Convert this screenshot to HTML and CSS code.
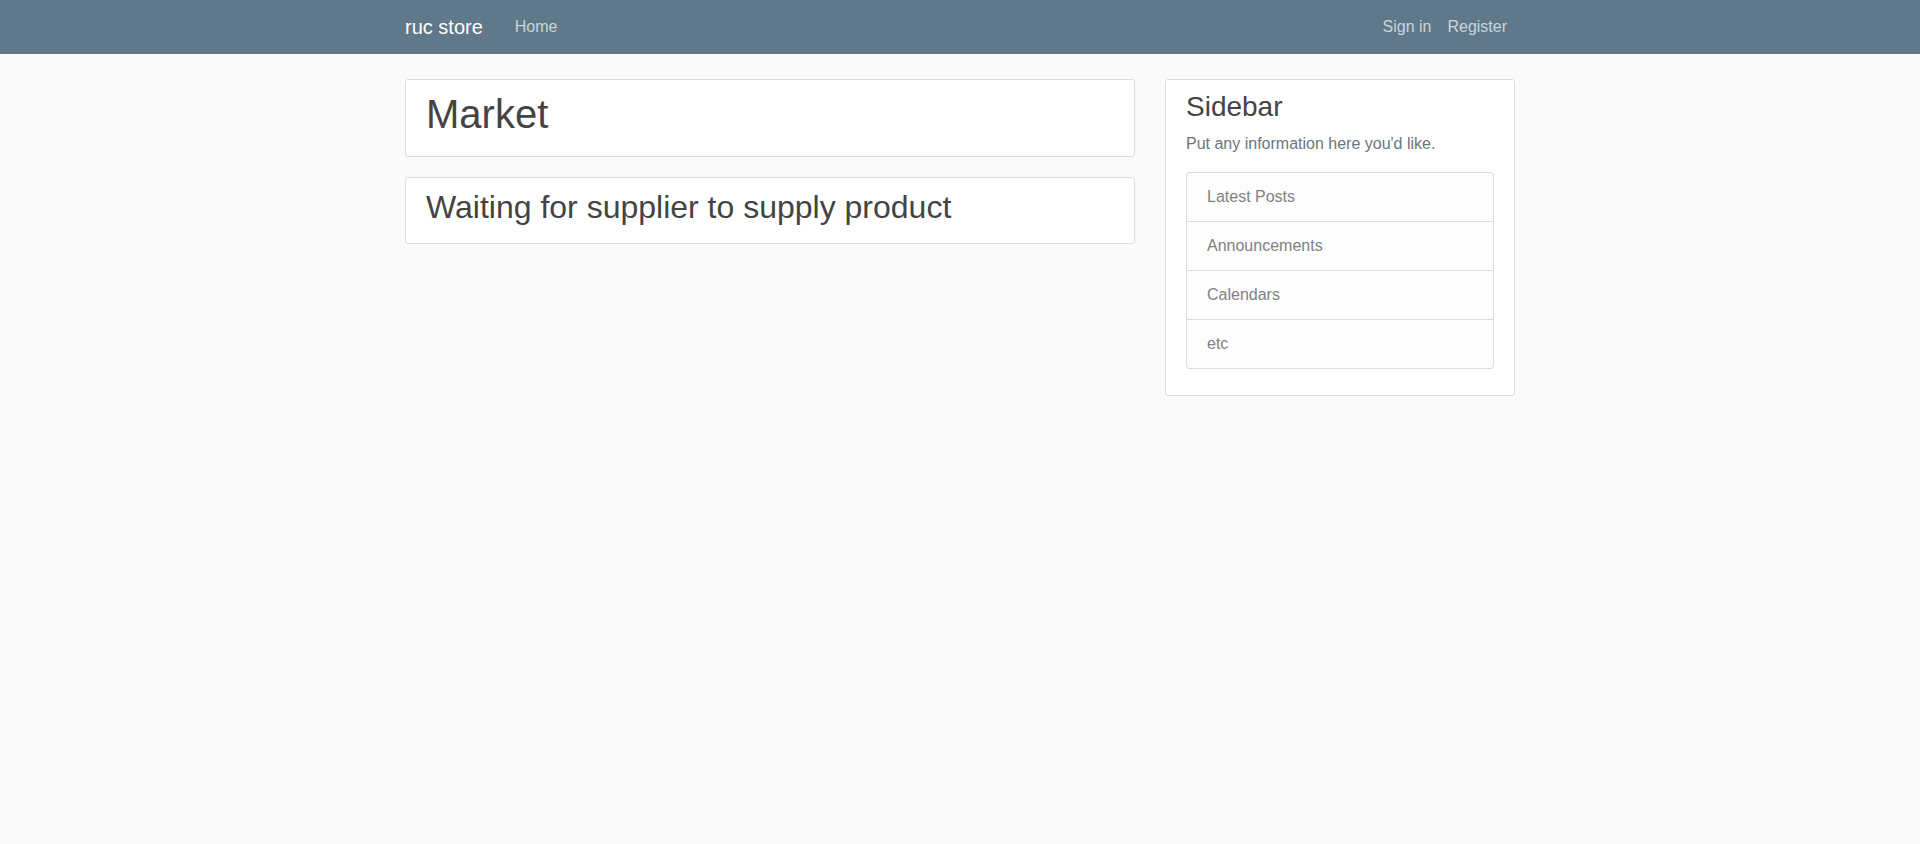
FILE: index.html
```html
<!DOCTYPE html>
<html lang="en">
<head>
<meta charset="utf-8">
<title>ruc store</title>
<link rel="stylesheet" href="styles.css">
</head>
<body>
<header class="site-header">
  <nav class="navbar">
    <div class="container nav-inner">
      <a class="navbar-brand" href="#">ruc store</a>
      <div class="navbar-nav">
        <a class="nav-link" href="#">Home</a>
      </div>
      <div class="navbar-nav nav-right">
        <a class="nav-link" href="#">Sign in</a>
        <a class="nav-link" href="#">Register</a>
      </div>
    </div>
  </nav>
</header>
<main class="container">
  <div class="row">
    <div class="col-main">
      <div class="content-section">
        <h1 class="title-lg">Market</h1>
      </div>
      <div class="content-section">
        <h2 class="title-md">Waiting for supplier to supply product</h2>
      </div>
    </div>
    <div class="col-side">
      <div class="content-section">
        <h3 class="title-sm">Sidebar</h3>
        <p class="text-muted">Put any information here you'd like.</p>
        <ul class="list-group">
          <li class="list-group-item">Latest Posts</li>
          <li class="list-group-item">Announcements</li>
          <li class="list-group-item">Calendars</li>
          <li class="list-group-item">etc</li>
        </ul>
      </div>
    </div>
  </div>
</main>
</body>
</html>
```
FILE: styles.css
```css
* { box-sizing: border-box; }

html, body { margin: 0; padding: 0; }

body {
  background: #fafafa;
  color: #333333;
  font-family: "Liberation Sans", Arial, sans-serif;
  font-size: 16px;
  line-height: 1.5;
}

a { text-decoration: none; }

.container {
  width: 1140px;
  margin: 0 auto;
  padding: 0 15px;
}

.navbar {
  background-color: #5f788a;
  height: 54px;
  padding: 7px 0;
}

.nav-inner {
  display: flex;
  align-items: center;
}

.navbar-brand {
  color: #ffffff;
  font-size: 20px;
  line-height: 30px;
  padding: 5px 0;
  margin-right: 24px;
}

.navbar-nav {
  display: flex;
}

.nav-right { margin-left: auto; }

.nav-link {
  color: #cbd5db;
  padding: 8px;
  line-height: 24px;
}

main.container { margin-top: 25px; }

.row {
  display: flex;
  margin: 0 -15px;
}

.col-main {
  flex: 0 0 66.666667%;
  max-width: 66.666667%;
  padding: 0 15px;
}

.col-side {
  flex: 0 0 33.333333%;
  max-width: 33.333333%;
  padding: 0 15px;
}

.content-section {
  background: #ffffff;
  padding: 10px 20px;
  border: 1px solid #dddddd;
  border-radius: 3px;
  margin-bottom: 20px;
}

.title-lg, .title-md, .title-sm {
  color: #444444;
  font-weight: 500;
  line-height: 1.2;
  margin: 0 0 8px 0;
}

.title-lg { font-size: 40px; }
.title-md { font-size: 32px; margin-bottom: 7px; }
.title-sm { font-size: 28px; }

.text-muted {
  color: #6c757d;
  margin: 0 0 16px 0;
}

.list-group {
  list-style: none;
  padding: 0;
  margin: 0 0 16px 0;
  display: flex;
  flex-direction: column;
}

.list-group-item {
  background: #fdfdfe;
  color: #818182;
  padding: 12px 20px;
  border: 1px solid rgba(0, 0, 0, 0.125);
  margin-bottom: -1px;
  line-height: 24px;
}

.list-group-item:first-child {
  border-top-left-radius: 4px;
  border-top-right-radius: 4px;
}

.list-group-item:last-child {
  margin-bottom: 0;
  border-bottom-left-radius: 4px;
  border-bottom-right-radius: 4px;
}
```
